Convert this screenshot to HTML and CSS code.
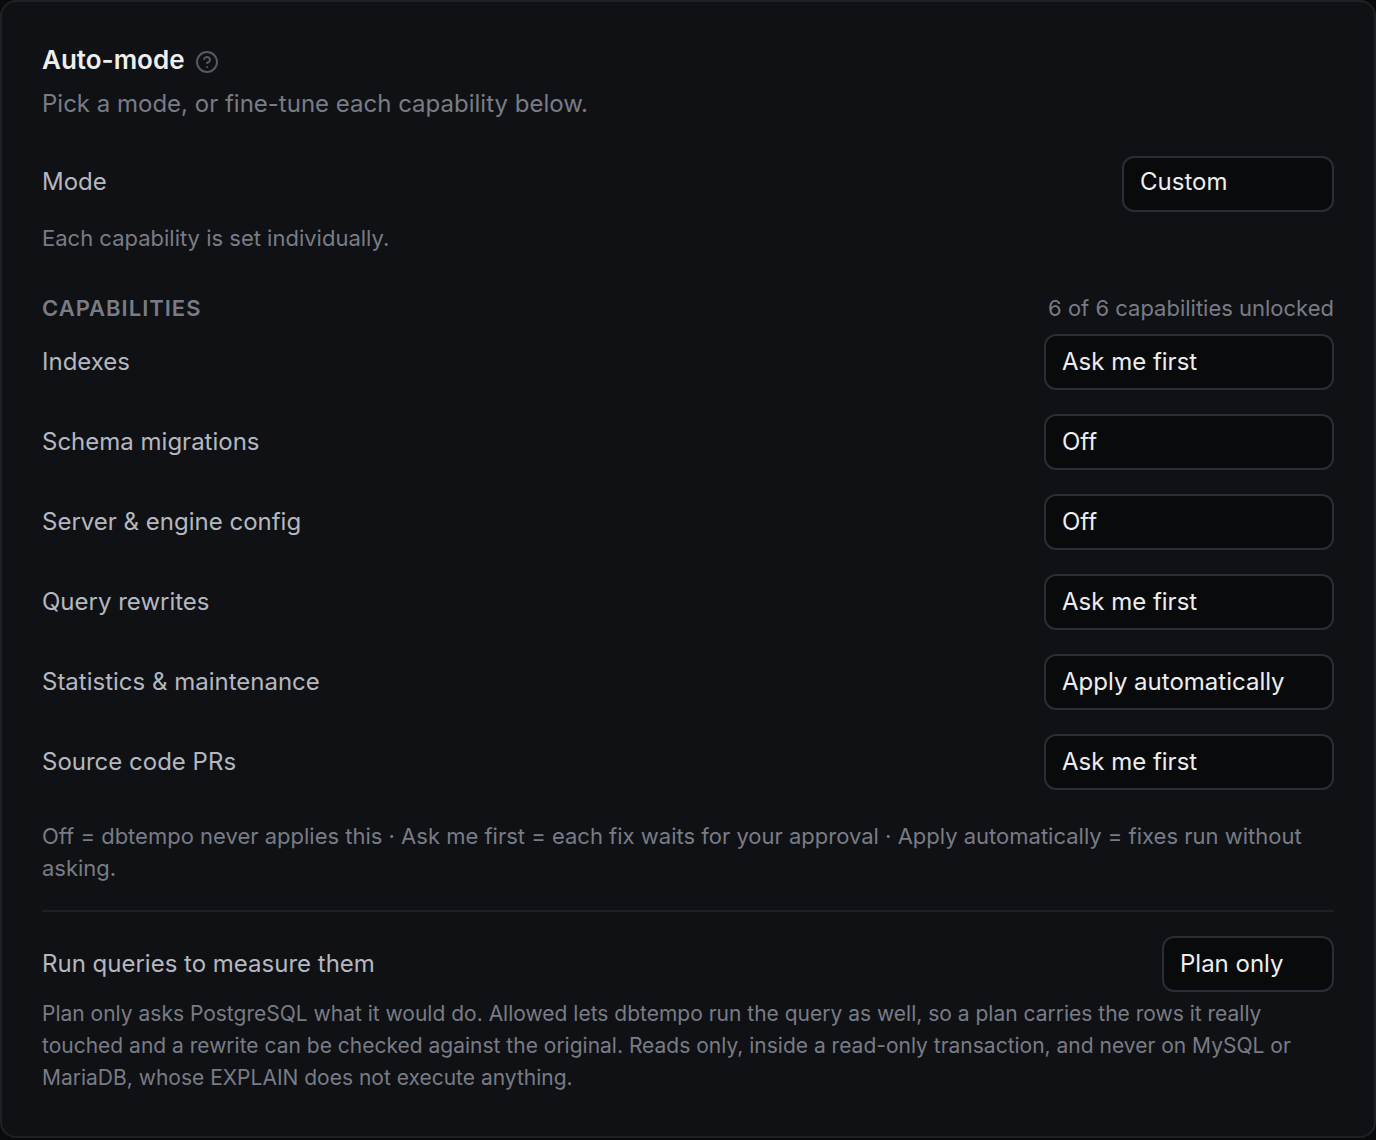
FILE: index.html
```
<!DOCTYPE html>
<html lang="en">

<head>
	<meta charset="UTF-8">
	<meta name="viewport" content="width=device-width, initial-scale=1.0">
	<title>Auto-mode</title>
	<link rel="stylesheet" href="styles.css">
</head>
<body>
	<main class="card">

		<header>
			<div class="title">
				<h1>Auto-mode</h1>
				<button class="help" type="button" aria-label="Help">
					<svg viewBox="0 0 24 24" fill="none" stroke="currentColor" stroke-width="2" stroke-linecap="round" stroke-linejoin="round">
						<circle cx="12" cy="12" r="10" />
						<path d="M9.09 9a3 3 0 0 1 5.83 1c0 2-3 3-3 3" />
						<path d="M12 17h.01" />
					</svg>
				</button>
			</div>
			<p class="intro">Pick a mode, or fine-tune each capability below.</p>
		</header>

		<!-- MODE --------------------------------- -->
		<section class="mode">
			<div class="row">
				<label for="mode">Mode</label>
				<select id="mode" class="select-mode">
					<option>Custom</option>
				</select>
			</div>
			<p class="hint">Each capability is set individually.</p>
		</section>

		<!-- CAPABILITIES --------------------------------- -->
		<section class="capabilities">
			<div class="section-head">
				<h2>Capabilities</h2>
				<p class="hint">6 of 6 capabilities unlocked</p>
			</div>
			<div class="rows">
				<div class="row">
					<label for="indexes">Indexes</label>
					<select id="indexes" class="select-capability">
						<option>Off</option>
						<option selected>Ask me first</option>
						<option>Apply automatically</option>
					</select>
				</div>
				<div class="row">
					<label for="schema">Schema migrations</label>
					<select id="schema" class="select-capability">
						<option selected>Off</option>
						<option>Ask me first</option>
						<option>Apply automatically</option>
					</select>
				</div>
				<div class="row">
					<label for="config">Server &amp; engine config</label>
					<select id="config" class="select-capability">
						<option selected>Off</option>
						<option>Ask me first</option>
						<option>Apply automatically</option>
					</select>
				</div>
				<div class="row">
					<label for="rewrites">Query rewrites</label>
					<select id="rewrites" class="select-capability">
						<option>Off</option>
						<option selected>Ask me first</option>
						<option>Apply automatically</option>
					</select>
				</div>
				<div class="row">
					<label for="statistics">Statistics &amp; maintenance</label>
					<select id="statistics" class="select-capability">
						<option>Off</option>
						<option>Ask me first</option>
						<option selected>Apply automatically</option>
					</select>
				</div>
				<div class="row">
					<label for="source">Source code PRs</label>
					<select id="source" class="select-capability">
						<option>Off</option>
						<option selected>Ask me first</option>
						<option>Apply automatically</option>
					</select>
				</div>
			</div>
			<p class="hint legend">Off = dbtempo never applies this · Ask me first = each fix waits for your approval · Apply automatically = fixes run without asking.</p>
		</section>

		<!-- MEASURE --------------------------------- -->
		<section class="measure">
			<div class="row">
				<label for="measure">Run queries to measure them</label>
				<select id="measure" class="select-measure">
					<option>Plan only</option>
					<option>Allowed</option>
				</select>
			</div>
			<p class="hint">Plan only asks PostgreSQL what it would do. Allowed lets dbtempo run the query as well, so a plan carries the rows it really touched and a rewrite can be checked against the original. Reads only, inside a read-only transaction, and never on MySQL or MariaDB, whose EXPLAIN does not execute anything.</p>
		</section>

	</main>
</body>

</html>
```
FILE: styles.css
```
/* GENERAL --------------------------------- */
* {
	box-sizing: border-box;
}
html,
body {
	margin: 0;
	padding: 0;
}
body {
	background-color: #090a0c;
	font-family: Inter, 'Liberation Sans', sans-serif;
	font-size: 24px;
	line-height: 36px;
	color: #b4b8c0;
}
h1,
h2,
p {
	margin: 0;
}
.card {
	padding: 40px 40px 42px;
	background-color: #101114;
	border: 2px solid #1f2127;
	border-radius: 16px;
}

/* HEADER --------------------------------- */
.title {
	display: flex;
	align-items: center;
	gap: 10px;
}
h1 {
	font-size: 26px;
	font-weight: 600;
	color: #edeef0;
}
.help {
	display: flex;
	padding: 4px 0 0;
	background: none;
	border: 0;
	color: #555962;
	cursor: pointer;
}
.help svg {
	width: 24px;
	height: 24px;
}
.intro {
	margin-top: 8px;
	color: #787c86;
}

/* ROWS --------------------------------- */
.row {
	display: flex;
	align-items: center;
	justify-content: space-between;
	gap: 24px;
}
.rows {
	display: flex;
	flex-direction: column;
	gap: 24px;
}
select {
	height: 56px;
	padding: 0 16px;
	appearance: none;
	background-color: #090a0c;
	border: 2px solid #2a2d35;
	border-radius: 12px;
	font: inherit;
	color: #edeef0;
}
.select-mode {
	width: 212px;
}
.select-capability {
	width: 290px;
}
.select-measure {
	width: 172px;
}
.hint {
	font-size: 22px;
	line-height: 32px;
	color: #787c86;
}

/* SECTIONS --------------------------------- */
.mode {
	margin-top: 34px;
}
.mode .row {
	margin-bottom: 10px;
}
.mode label,
.mode select {
	padding-bottom: 4px;
}
.capabilities {
	margin-top: 38px;
}
.section-head {
	display: flex;
	justify-content: space-between;
	margin-bottom: 10px;
}
h2 {
	font-size: 22px;
	line-height: 32px;
	font-weight: 600;
	letter-spacing: 1px;
	text-transform: uppercase;
	color: #787c86;
}
.legend {
	margin-top: 30px;
}
.measure {
	margin-top: 26px;
	padding-top: 24px;
	border-top: 2px solid #1f2127;
}
.measure .row {
	margin-bottom: 6px;
}
.measure .hint {
	font-size: 21px;
}
```
